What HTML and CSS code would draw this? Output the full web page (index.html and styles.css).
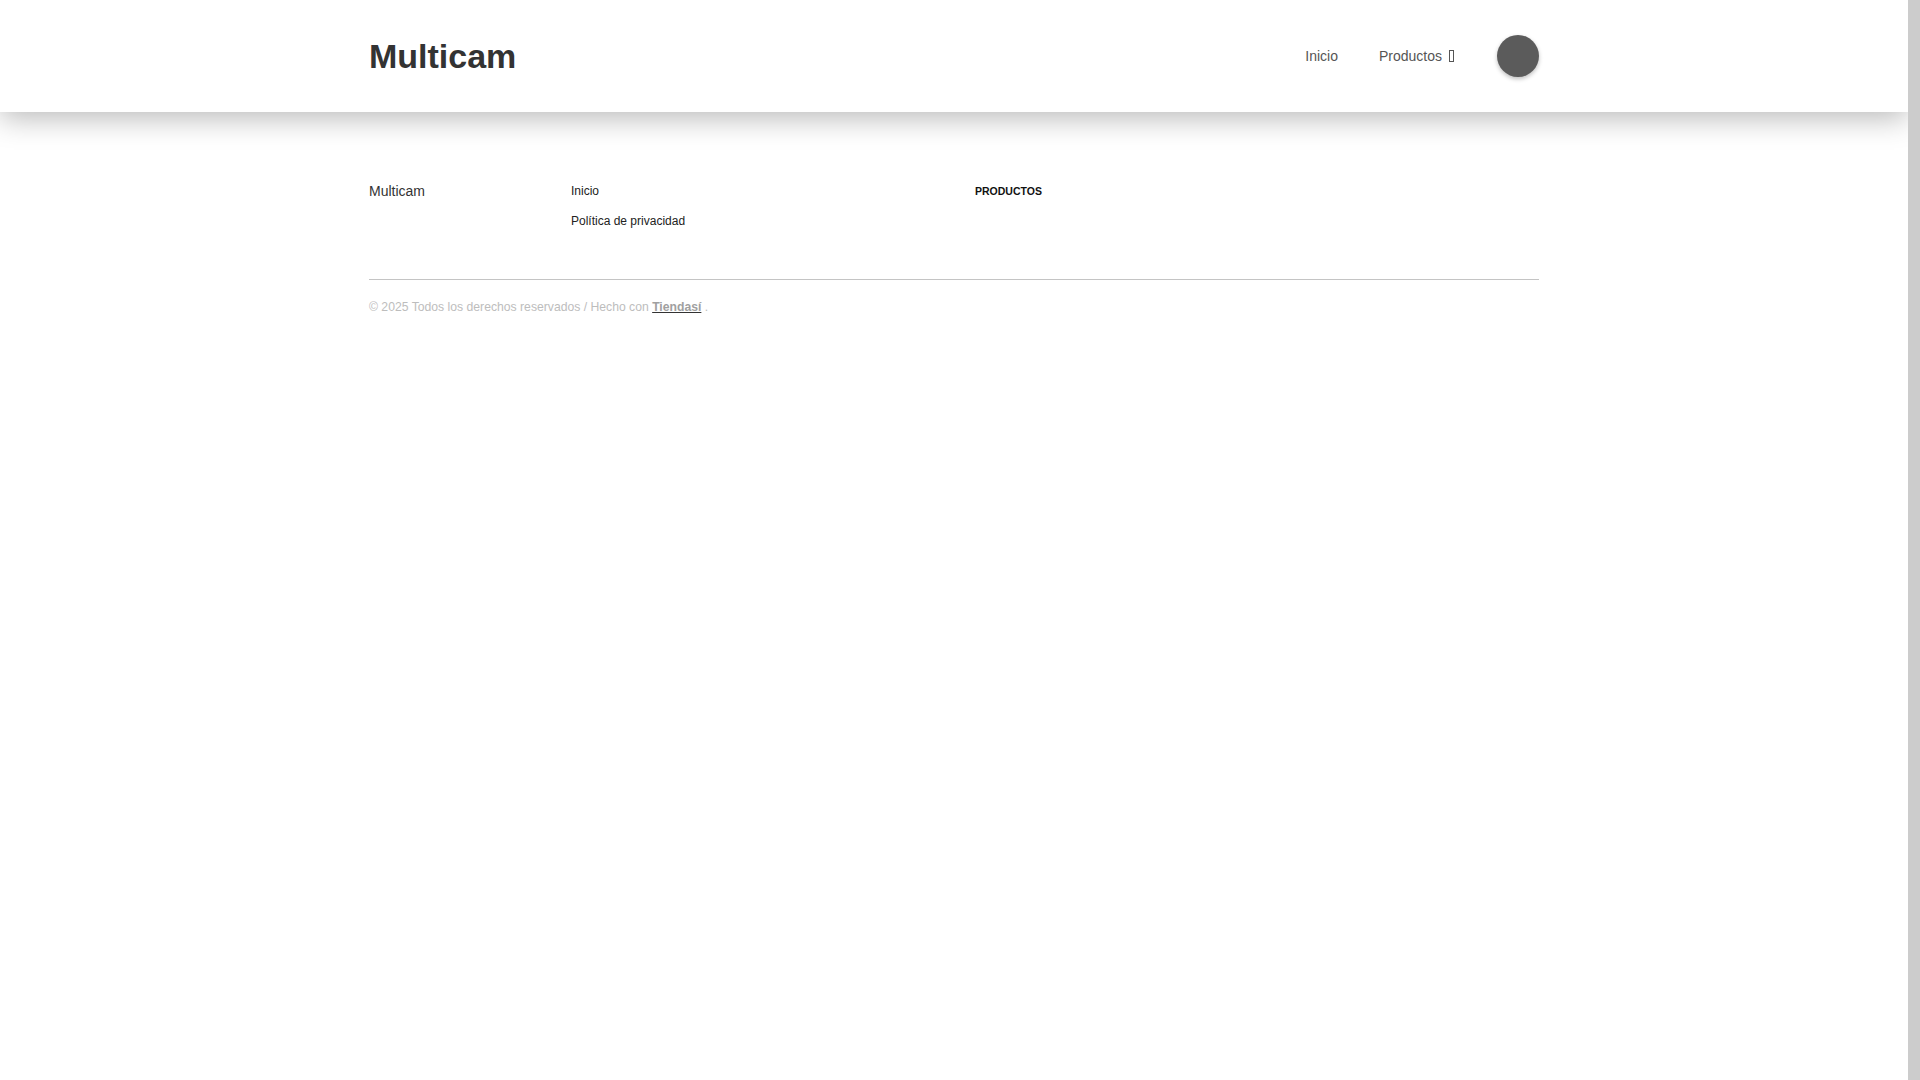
FILE: index.html
```html
<html><head>
    <link rel="stylesheet" href="styles.css">
</head><body>
    <div class="page">
        <header class="topbar">
            <div class="container topbar-inner">
                <a class="logo" href="#">Multicam</a>
                <nav class="menu">
                    <a href="#">Inicio</a>
                    <a href="#">Productos <span class="caret"></span></a>
                    <button class="cart"></button>
                </nav>
            </div>
        </header>
        <footer class="site-footer">
            <div class="container">
                <div class="footer-cols">
                    <div class="brand">Multicam</div>
                    <ul class="links">
                        <li><a href="#">Inicio</a></li>
                        <li><a href="#">Política de privacidad</a></li>
                    </ul>
                    <div class="cat-title">PRODUCTOS</div>
                </div>
                <p class="copy">© 2025 Todos los derechos reservados / Hecho con <a href="#">Tiendasí</a> .</p>
            </div>
        </footer>
    </div>
    <div class="scroll-track"></div>
</body></html>
```

FILE: styles.css
```css
body {
    margin: 0;
    min-height: 100vh;
    display: flex;
    background: #fff;
    font-family: "Liberation Sans", Arial, sans-serif;
    color: #333;
}

a {
    color: inherit;
    text-decoration: none;
}

.page {
    flex: 1;
}

.scroll-track {
    width: 12px;
    background: #cccccc;
    position: relative;
    z-index: 3;
}

.container {
    width: 1170px;
    margin: 0 auto;
}

.topbar {
    position: relative;
    z-index: 2;
    height: 112px;
    background: #fff;
    box-shadow: 0 6px 28px rgba(0, 0, 0, 0.28);
}

.topbar-inner {
    height: 100%;
    display: flex;
    align-items: center;
    justify-content: space-between;
}

.logo {
    font-size: 34px;
    font-weight: bold;
    color: #333;
}

.menu {
    display: flex;
    align-items: center;
    font-size: 14px;
    color: #555;
}

.menu a {
    margin-left: 41px;
    display: flex;
    align-items: center;
}

.caret {
    display: inline-block;
    width: 3px;
    height: 10px;
    border: 1px solid #555;
    margin-left: 7px;
}

.cart {
    width: 42px;
    height: 42px;
    border: none;
    border-radius: 50%;
    background: #5b5b5b;
    margin-left: 43px;
    box-shadow: 0 2px 4px rgba(0, 0, 0, 0.25);
}

.site-footer {
    padding-top: 71px;
}

.footer-cols {
    display: grid;
    grid-template-columns: 202px 404px 1fr;
    padding-bottom: 50px;
    border-bottom: 1px solid #c4c4c4;
}

.brand {
    font-size: 14px;
    color: #333;
    line-height: 16px;
}

.links {
    list-style: none;
    margin: 0;
    padding: 0;
    font-size: 12px;
    color: #222;
}

.links li {
    line-height: 16px;
    margin-bottom: 14px;
}

.links li:last-child {
    margin-bottom: 0;
}

.cat-title {
    font-size: 10.5px;
    font-weight: bold;
    color: #111;
    line-height: 16px;
}

.copy {
    margin: 20px 0 0;
    font-size: 12.2px;
    color: #bdbdbd;
}

.copy a {
    font-weight: bold;
    color: #a0a0a0;
    text-decoration: underline;
    text-decoration-color: #333;
}
```
